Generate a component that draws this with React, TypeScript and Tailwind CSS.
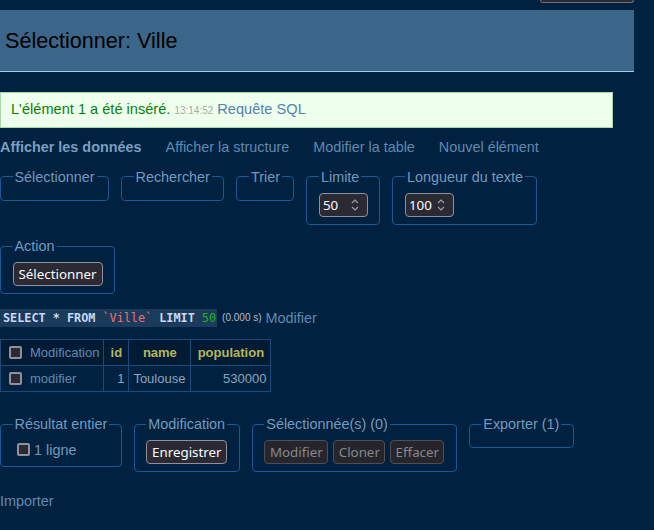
import type { ReactNode } from "react";

const LINK = "text-[#6389b0]";
const UI_FONT = "font-['Noto_Sans','Open_Sans',sans-serif]";

function Fieldset({ legend, children }: { legend: string; children?: ReactNode }) {
  return (
    <fieldset className="border border-[#1c5796] rounded-[4px] px-[11.5px] pt-[7px] pb-[7px]">
      <legend className="px-[2px] leading-[18px] text-[#7599bd]">{legend}</legend>
      {children}
    </fieldset>
  );
}

function Button({ label, width, disabled }: { label: string; width: string; disabled?: boolean }) {
  return (
    <button
      disabled={disabled}
      className={`h-[24px] ${width} rounded-[4px] border text-[13.33px] leading-none ${UI_FONT} ${
        disabled
          ? "bg-[#26252c] border-[#4f4e56] text-[#88888e]"
          : "bg-[#2b2a33] border-[#8f8f9d] text-[#fbfbfe]"
      }`}
    >
      {label}
    </button>
  );
}

function NumInput({ value }: { value: string }) {
  return (
    <div
      className={`flex items-center w-[49px] h-[24px] bg-[#2b2a33] border border-[#8f8f9d] rounded-[4px] pl-[3px] pr-[8px] text-[13.33px] text-[#fbfbfe] ${UI_FONT}`}
    >
      <span className="flex-1">{value}</span>
      <svg width="8" height="14" viewBox="0 0 8 14">
        <path d="M1 5 L4 2 L7 5 M1 9 L4 12 L7 9" stroke="#9d9da5" strokeWidth="1.2" fill="none" />
      </svg>
    </div>
  );
}

function Checkbox() {
  return (
    <span className="inline-block w-[13px] h-[13px] border-2 border-[#8f8f9d] rounded-[2px] bg-[#2b2a33] shrink-0" />
  );
}

export default function App() {
  return (
    <div className="min-h-screen w-full bg-[#002240] font-['Liberation_Sans',Arial,sans-serif] text-[14.4px] leading-[18px] text-[#7599bd] overflow-hidden">
      {/* top strip with the cut-off button */}
      <div className="h-[10px] w-[634px] flex justify-end">
        <div className="w-[94px] h-[3px] rounded-b-[4px] bg-[#2b2a33] border border-t-0 border-[#6f6f78]" />
      </div>

      {/* heading */}
      <div className="w-[634px] h-[62px] bg-[#3c6689] border-b border-[#a6c8e8] flex items-center pl-[5px]">
        <h2 className="text-[21.6px] text-black">Sélectionner: Ville</h2>
      </div>

      {/* message */}
      <div className="mt-[20px] w-[613px] bg-[#eeffee] border border-[#a6d8a6] pl-[10px] pr-[10px] py-[7.2px]">
        <span className="text-[#0a800a] text-[14.6px]">L'élément 1 a été inséré.</span>{" "}
        <span className="text-[10px] text-[#aaaaaa]">13:14:52</span>{" "}
        <span className="text-[#5581ad] text-[14.6px]">Requête SQL</span>
      </div>

      {/* links */}
      <div className="mt-[9.6px] flex gap-6">
        <span className="font-bold text-[#7c9ec2]">Afficher les données</span>
        <span className={LINK}>Afficher la structure</span>
        <span className={LINK}>Modifier la table</span>
        <span className={LINK}>Nouvel élément</span>
      </div>

      {/* search fieldsets */}
      <div className="mt-[12px] flex items-start gap-3">
        <Fieldset legend="Sélectionner" />
        <Fieldset legend="Rechercher" />
        <Fieldset legend="Trier" />
        <Fieldset legend="Limite">
          <NumInput value="50" />
        </Fieldset>
        <Fieldset legend="Longueur du texte">
          <NumInput value="100" />
        </Fieldset>
      </div>

      <div className="mt-[12.5px] flex">
        <Fieldset legend="Action">
          <Button label="Sélectionner" width="w-[90px]" />
        </Fieldset>
      </div>

      {/* query */}
      <div className="mt-[15px] flex items-center">
        <code className="h-[18px] flex items-center bg-[#1b3b5c] pl-[3px] pr-[1px] text-[11.8px] font-['DejaVu_Sans_Mono',monospace] whitespace-pre text-[#c8daf5]">
          <b>SELECT * FROM </b>
          <span className="text-[#ee7070]">`Ville`</span>
          <b> LIMIT </b>
          <span className="text-[#22b022]">50</span>
        </code>
        <span className="ml-[5px] text-[10px] text-[#b0bccc]">(0.000 s)</span>
        <span className={`ml-[4px] ${LINK}`}>Modifier</span>
      </div>

      {/* result table */}
      <table className="mt-[12px] border-collapse text-[13px] leading-[16px] text-[#8ea4ba]">
        <thead>
          <tr className="h-[26px] bg-[#011b35]">
            <th className="w-[103px] border border-[#1a4a7c] px-[4px] font-normal text-left">
              <span className="flex items-center">
                <span className="ml-[4px] mr-[8px] flex">
                  <Checkbox />
                </span>
                <span className={LINK}>Modification</span>
              </span>
            </th>
            <th className="w-[25px] border border-[#1a4a7c] px-[4px] font-bold text-[#b5b55a] text-center">id</th>
            <th className="w-[62px] border border-[#1a4a7c] px-[4px] font-bold text-[#b5b55a] text-center">name</th>
            <th className="w-[80px] border border-[#1a4a7c] px-[4px] font-bold text-[#b5b55a] text-center">population</th>
          </tr>
        </thead>
        <tbody>
          <tr className="h-[26px]">
            <td className="border border-[#1a4a7c] px-[4px]">
              <span className="flex items-center">
                <span className="ml-[4px] mr-[8px] flex">
                  <Checkbox />
                </span>
                <span className={LINK}>modifier</span>
              </span>
            </td>
            <td className="border border-[#1a4a7c] px-[4px] text-right">1</td>
            <td className="border border-[#1a4a7c] px-[4px]">Toulouse</td>
            <td className="border border-[#1a4a7c] px-[4px] text-right">530000</td>
          </tr>
        </tbody>
      </table>

      {/* bottom actions */}
      <div className="mt-[23px] flex items-start gap-3">
        <Fieldset legend="Résultat entier">
          <div className="h-[19px] flex items-center">
            <span className="ml-[4.5px] mr-[4px] flex">
              <Checkbox />
            </span>
            <span>1 ligne</span>
          </div>
        </Fieldset>
        <Fieldset legend="Modification">
          <Button label="Enregistrer" width="w-[81px]" />
        </Fieldset>
        <Fieldset legend="Sélectionnée(s) (0)">
          <div className="flex gap-[5px]">
            <Button label="Modifier" width="w-[64px]" disabled />
            <Button label="Cloner" width="w-[52px]" disabled />
            <Button label="Effacer" width="w-[54px]" disabled />
          </div>
        </Fieldset>
        <Fieldset legend="Exporter (1)" />
      </div>

      <div className={`mt-[20px] ${LINK}`}>Importer</div>
    </div>
  );
}
